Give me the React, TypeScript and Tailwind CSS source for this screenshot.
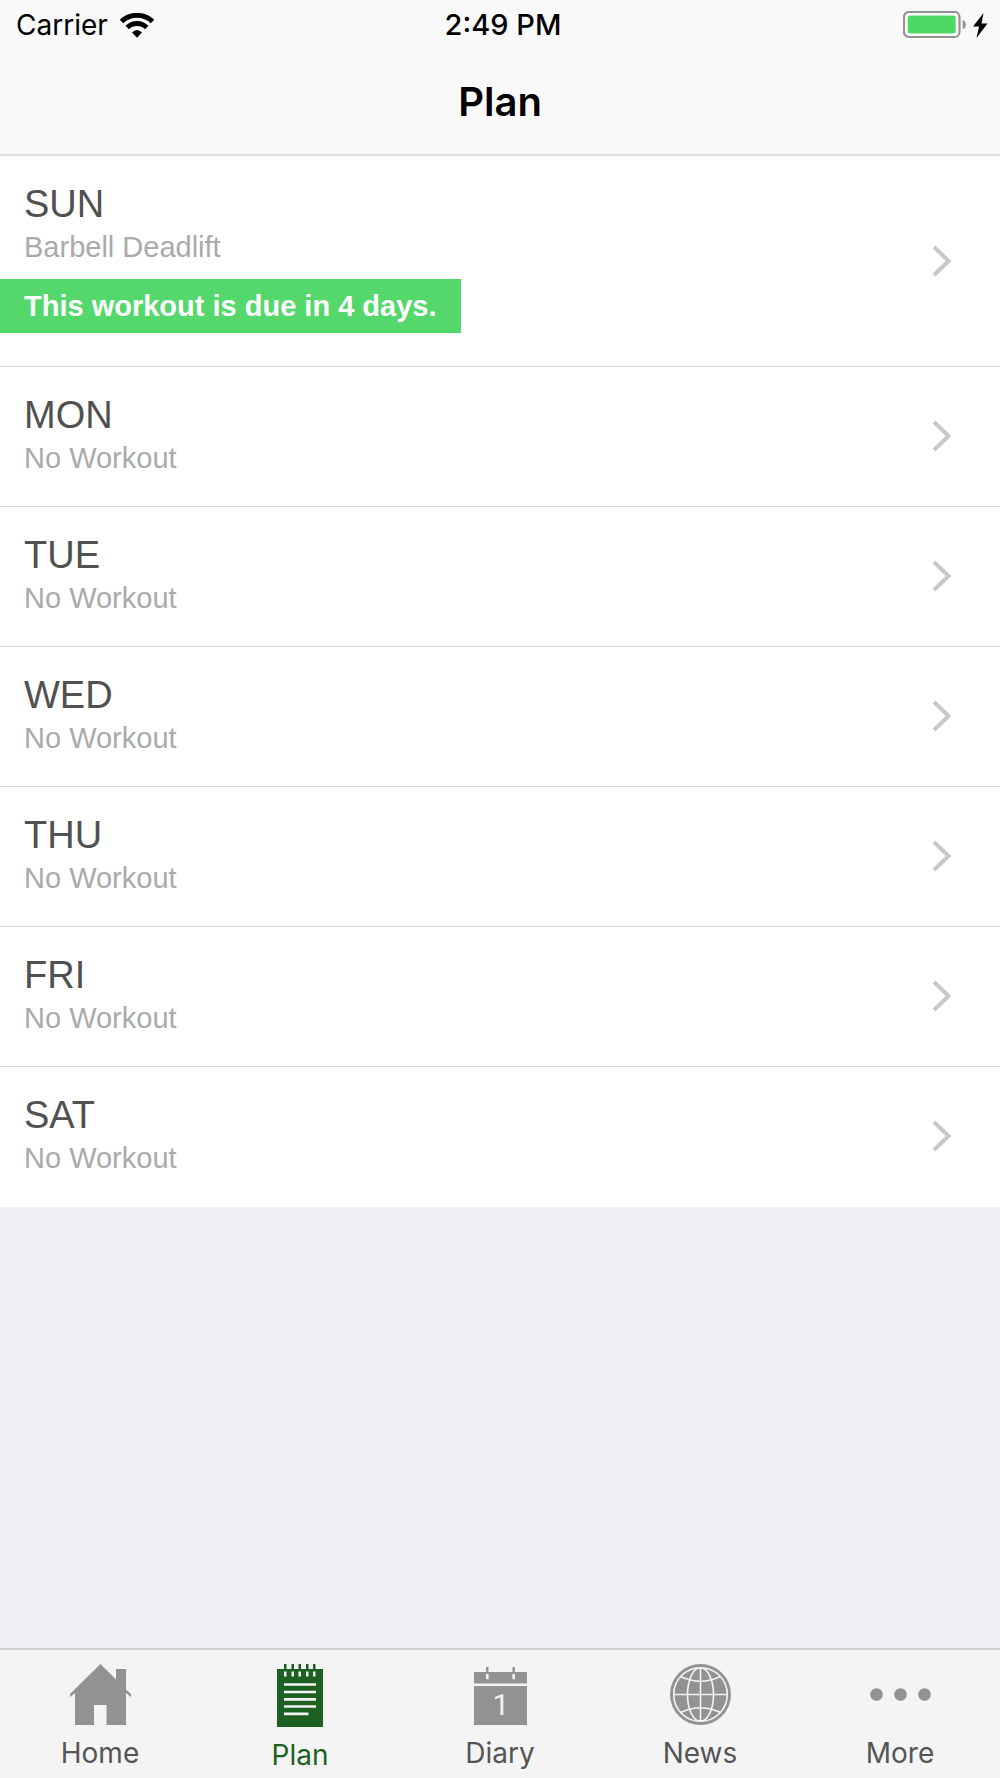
import React, { ReactElement } from 'react';

interface PlanDay {
  day: string;
  workout: string;
  notice?: string;
}

interface TabItem {
  label: string;
  icon: ReactElement;
  active?: boolean;
}

const HomeIcon: React.FC = () => (
  <svg width="61" height="61" viewBox="0 0 61 61" fill="#929292" aria-hidden="true">
    <path d="M30.5 0 L46 15.5 V5 H56 V25.5 L61 30 V33 L56 29 V61 H36.5 V41 H24 V61 H5 V29 L0 33 V30 Z" />
  </svg>
);

const PlanIcon: React.FC = () => (
  <svg width="46" height="63" viewBox="0 0 46 63" aria-hidden="true">
    <rect y="5" width="46" height="58" fill="#1d6122" />
    {[7, 14.5, 21.5, 29, 36].map(x => (
      <g key={x}>
        <rect x={x} y="0" width="2.5" height="6" fill="#1d6122" />
        <rect x={x} y="7.5" width="2.5" height="5" fill="#f4f4f4" />
      </g>
    ))}
    <path
      d="M7 20.5 H39 M7 28 H39 M7 35.3 H39 M7 42.5 H39 M7 49.8 H31.5"
      stroke="#f4f4f4"
      strokeWidth="2.7"
    />
  </svg>
);

const DiaryIcon: React.FC = () => (
  <svg width="53" height="61" viewBox="0 0 53 61" aria-hidden="true">
    <path d="M0 8 H53 V19.5 H0 Z M0 22 H53 V61 H0 Z" fill="#929292" />
    <path d="M13.3 3 V9 M39.7 3 V9" stroke="#929292" strokeWidth="2.4" />
    <path d="M13.3 10 V15.3 M39.7 10 V15.3" stroke="#f4f4f4" strokeWidth="2.6" />
    <text
      x="27"
      y="51"
      textAnchor="middle"
      fill="#f4f4f4"
      className="font-['Roboto',sans-serif] text-[30px]"
    >
      1
    </text>
  </svg>
);

const NewsIcon: React.FC = () => (
  <svg width="61" height="61" viewBox="0 0 61 61" aria-hidden="true">
    <circle cx="30.5" cy="30.5" r="30.5" fill="#929292" />
    <g fill="none" stroke="#f4f4f4" strokeWidth="1.6">
      <circle cx="30.5" cy="30.5" r="26.8" />
      <ellipse cx="30.5" cy="30.5" rx="13" ry="26.8" />
      <path d="M3.5 30.5 H57.5 M30.5 3.5 V57.5 M10.5 12.5 Q30.5 22 50.5 12.5 M10.5 48.5 Q30.5 39 50.5 48.5" />
    </g>
  </svg>
);

const MoreIcon: React.FC = () => (
  <svg width="61" height="61" viewBox="0 0 61 61" fill="#929292" aria-hidden="true">
    <circle cx="6.5" cy="30.5" r="6.3" />
    <circle cx="30.5" cy="30.5" r="6.3" />
    <circle cx="54.5" cy="30.5" r="6.3" />
  </svg>
);

const WifiIcon: React.FC = () => (
  <svg width="34" height="25" viewBox="0 0 34 25" aria-hidden="true">
    <path d="M1.5 8.5 A22.5 22.5 0 0 1 32.5 8.5" fill="none" stroke="#000" strokeWidth="5" />
    <path d="M7.2 14.5 A14 14 0 0 1 26.8 14.5" fill="none" stroke="#000" strokeWidth="4.8" />
    <path d="M12 19.6 Q17 14.6 22 19.6 L17 24.7 Z" />
  </svg>
);

const BatteryIcon: React.FC = () => (
  <svg width="85" height="28" viewBox="0 0 85 28" aria-hidden="true">
    <rect x="1" y="1" width="55.5" height="25" rx="5" fill="#fff" stroke="#929292" strokeWidth="2.2" />
    <rect x="4.7" y="4.5" width="48" height="18" rx="2.5" fill="#4cd964" />
    <path d="M59.7 9 Q62.8 10 62.8 13.5 Q62.8 17 59.7 18.3 Z" fill="#929292" />
    <path d="M80.5 2 L70 15.5 H76 L73.5 27 L84.5 12.5 H78.5 Z" />
  </svg>
);

const ChevronIcon: React.FC = () => (
  <svg width="20" height="32" viewBox="0 0 20 32" fill="none" aria-hidden="true">
    <path d="M2 2 L16.5 16 L2 30" stroke="#c7c7cc" strokeWidth="4" />
  </svg>
);

const days: PlanDay[] = [
  { day: 'SUN', workout: 'Barbell Deadlift', notice: 'This workout is due in 4 days.' },
  { day: 'MON', workout: 'No Workout' },
  { day: 'TUE', workout: 'No Workout' },
  { day: 'WED', workout: 'No Workout' },
  { day: 'THU', workout: 'No Workout' },
  { day: 'FRI', workout: 'No Workout' },
  { day: 'SAT', workout: 'No Workout' },
];

const tabs: TabItem[] = [
  { label: 'Home', icon: <HomeIcon /> },
  { label: 'Plan', icon: <PlanIcon />, active: true },
  { label: 'Diary', icon: <DiaryIcon /> },
  { label: 'News', icon: <NewsIcon /> },
  { label: 'More', icon: <MoreIcon /> },
];

const DayRow: React.FC<{ item: PlanDay }> = ({ item }) => (
  <li className="border-b border-[#d9d9dc] last:border-white">
    <a
      href={`#${item.day.toLowerCase()}`}
      className="flex items-center justify-between pt-[26px] pr-12 pb-[27px]"
    >
      <div>
        <h2 className="px-6 text-[38px] leading-[44px] text-[#505050]">{item.day}</h2>
        <p className="px-6 text-[29px] leading-[42px] text-[#aaaaaa]">{item.workout}</p>
        {item.notice && (
          <p className="mt-[11px] mb-1.5 bg-[#54d86c] px-6 text-[29px] leading-[54px] font-bold text-white">
            {item.notice}
          </p>
        )}
      </div>
      <ChevronIcon />
    </a>
  </li>
);

const App: React.FC = () => {
  return (
    <div className="flex min-h-screen flex-col bg-[#efeff4] font-['Liberation_Sans',sans-serif]">
      <header className="border-b-2 border-[#dcdcdc] bg-[#f9f9f9] font-['Inter',sans-serif] text-black">
        {/* Status bar */}
        <div className="grid h-[50px] grid-cols-3 items-center px-3">
          <div className="flex items-center gap-3 pl-1 text-[28px]">
            Carrier
            <WifiIcon />
          </div>
          <div className="pl-1.5 text-center text-[29px] font-medium">2:49 PM</div>
          <div className="flex justify-end">
            <BatteryIcon />
          </div>
        </div>
        <h1 className="pt-7 pb-7 text-center text-[40px] leading-[48px] font-semibold">Plan</h1>
      </header>

      <main className="flex-1">
        <ul className="bg-white">
          {days.map(item => (
            <DayRow key={item.day} item={item} />
          ))}
        </ul>
      </main>

      {/* Tab bar */}
      <nav className="grid grid-cols-5 border-t-2 border-[#cfcfd1] bg-[#f4f4f4] font-['Inter',sans-serif]">
        {tabs.map(tab => (
          <a
            key={tab.label}
            href={`#${tab.label.toLowerCase()}`}
            aria-current={tab.active ? 'page' : undefined}
            className={`flex h-32 flex-col items-center gap-3 pt-3.5 text-[28px] leading-8 ${
              tab.active ? 'text-[#1d6122]' : 'text-[#555555]'
            }`}
          >
            {tab.icon}
            {tab.label}
          </a>
        ))}
      </nav>
    </div>
  );
};

export default App;
